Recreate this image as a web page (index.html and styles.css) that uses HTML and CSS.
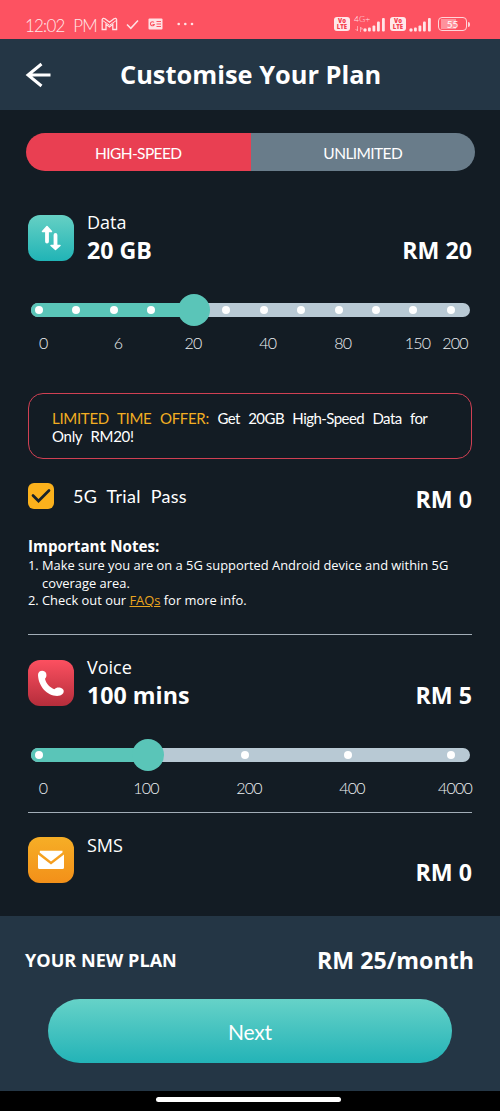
FILE: index.html
```html
<!DOCTYPE html>
<html lang="en">
<head>
<meta charset="utf-8">
<title>Customise Your Plan</title>
<link rel="stylesheet" href="styles.css">
</head>
<body>
<div class="status">
  <span class="clock">12:02 PM</span>
  <svg class="st-left" width="96" height="16" viewBox="0 0 96 16" fill="none" stroke="#ffe1e4">
    <path d="M1.2 13.5V3.6Q2 1.500 4 2.800L8.500 6.300L13 2.800Q15 1.500 15.600 3.600V13.500H11.800V8.300L8.500 10.900L5 8.300V13.500Z" stroke-width="1.300"/>
    <path d="M1.600 4.500L8.500 9.200L15.300 4.500" stroke-width="1"/>
    <path d="M26 8.500L29.800 12.300L37 4.500" stroke-width="1.500"/>
    <rect x="47.500" y="2.500" width="14" height="11" rx="1" fill="#ffe1e4" stroke="none"/>
    <path d="M53 6.500A2 2 0 1 0 53.300 8.500H51.500M55.500 5.500H60M55.500 8H60M55.500 10.500H60" stroke="#fc5462" stroke-width="1.100"/>
    <g fill="#ffe1e4" stroke="none"><circle cx="77.700" cy="8" r="1.300"/><circle cx="84.300" cy="8" r="1.300"/><circle cx="91" cy="8" r="1.300"/></g>
  </svg>
  <div class="st-right">
    <span class="volte"><b>Vo</b><b>LTE</b></span>
    <span class="net"><i>4G+</i><svg width="8" height="6" viewBox="0 0 8 6" stroke="#ffb3ba" fill="none" stroke-width=".8"><path d="M2.500 0V5M.5 3L2.500 5V3M5.500 6V1L7.500 3H5.500"/></svg></span>
    <svg class="bars" width="23" height="15" viewBox="0 0 23 15" fill="#ffe5e8"><circle cx="2" cy="13" r="1.700"/><rect x="5" y="10.500" width="2.800" height="4" rx="1"/><rect x="9.500" y="8.500" width="2.800" height="6" rx="1"/><rect x="14" y="4.500" width="2.800" height="10" rx="1"/><rect x="19" y="1" width="2.800" height="13.500" rx="1"/></svg>
    <span class="volte two"><b>Vo</b><b>LTE</b></span>
    <svg class="bars two" width="23" height="15" viewBox="0 0 23 15" fill="#ffe5e8"><circle cx="2" cy="13" r="1.700"/><rect x="5" y="10.500" width="2.800" height="4" rx="1"/><rect x="9.500" y="8.500" width="2.800" height="6" rx="1"/><rect x="14" y="4.500" width="2.800" height="10" rx="1"/><rect x="19" y="1" width="2.800" height="13.500" rx="1"/></svg>
    <span class="battery">55</span><span class="cap"></span>
  </div>
</div>
<header class="top">
  <svg class="back" width="26" height="26" viewBox="0 0 26 26" fill="none" stroke="#fff" stroke-width="3"><path d="M25.500 13H3M16.500 2L3 13L16.500 24"/></svg>
  <h1>Customise Your Plan</h1>
</header>
<main>
  <div class="tabs"><div class="tab on"><span>HIGH-SPEED</span></div><div class="tab"><span>UNLIMITED</span></div></div>

  <section class="row data">
    <div class="tile teal"><svg width="46" height="46" viewBox="0 0 46 46" fill="none" stroke="#fff" stroke-width="3.800" stroke-linecap="round"><path d="M19 26.500V15M27.500 20V32"/><path d="M14.500 16.500L19 11.500L23.500 16.500ZM23 30.500H32L27.500 34.500Z" fill="#fff" stroke-width="1.500" stroke-linejoin="round"/></svg></div>
    <div class="info"><span class="name">Data</span><strong>20 GB</strong></div>
    <strong class="price">RM 20</strong>
  </section>
  <div class="slider">
    <div class="fill s-data"></div>
    <div class="ticks twelve"><i></i><i></i><i></i><i></i><i></i><i></i><i></i><i></i><i></i><i></i><i></i><i></i></div>
    <div class="knob s-data"></div>
  </div>
  <div class="labels twelve"><span>0</span><span></span><span>6</span><span></span><span>20</span><span></span><span>40</span><span></span><span>80</span><span></span><span>150</span><span>200</span></div>

  <div class="offer"><div><em>LIMITED TIME OFFER:</em> <span class="deal">Get 20GB High-Speed Data for</span></div><div>Only RM20!</div></div>

  <div class="trial">
    <div class="check"><svg width="26" height="26" viewBox="0 0 26 26" fill="none" stroke="#17222b" stroke-width="2.700" stroke-linecap="round"><path d="M5 12.500L10.500 18L21 7.500"/></svg></div>
    <span class="pass">5G Trial Pass</span>
    <strong class="price">RM 0</strong>
  </div>

  <div class="notes">
    <h2>Important Notes:</h2>
    <div class="note"><span>1.</span><p>Make sure you are on a 5G supported Android device and within 5G<br>coverage area.</p></div>
    <div class="note"><span>2.</span><p>Check out our <a>FAQs</a> for more info.</p></div>
  </div>
  <hr>

  <section class="row voice">
    <div class="tile red"><svg width="46" height="46" viewBox="0 0 46 46" fill="#fff"><path d="M10 15C9.800 9.800 17 9.300 18.200 13.500C18.800 16 18.300 17.300 17 18.700C18 23.500 22 27.500 26.300 29.300C28 27.600 30 27.300 32.500 27.800C37.500 29 36.500 35 31 35.800C20 37 10.500 27 10 15Z"/></svg></div>
    <div class="info"><span class="name">Voice</span><strong>100 mins</strong></div>
    <strong class="price">RM 5</strong>
  </section>
  <div class="slider">
    <div class="fill s-voice"></div>
    <div class="ticks five"><i></i><i class="hid"></i><i></i><i></i><i></i></div>
    <div class="knob s-voice"></div>
  </div>
  <div class="labels five"><span>0</span><span>100</span><span>200</span><span>400</span><span>4000</span></div>
  <hr class="second">

  <section class="row sms">
    <div class="tile amber"><svg width="46" height="46" viewBox="0 0 46 46" fill="#fff"><path d="M12 13.800H34.500V15.500L23 24.500L11.700 15.500Z"/><path d="M10 17.500L23 27.500L36 17.500V30.500Q36 32 34.500 32H11.500Q10 32 10 30.500Z"/></svg></div>
    <div class="info"><span class="name">SMS</span></div>
    <strong class="price">RM 0</strong>
  </section>
</main>
<footer>
  <div class="total"><span class="plan">YOUR NEW PLAN</span><span class="sum">RM 25/month</span></div>
  <div class="next"><span>Next</span></div>
</footer>
<div class="nav"><div></div></div>
</body>
</html>
```
FILE: styles.css
```css
* { box-sizing: border-box; margin: 0; padding: 0; }
body { width: 500px; height: 1111px; overflow: hidden; background: #131c24; color: #fff; font-family: "Open Sans", "Noto Sans", sans-serif; white-space: nowrap; }
strong { font-weight: 700; }

.status { height: 39px; background: #fd5261; display: flex; align-items: flex-start; padding-left: 25px; }
.clock { font: 300 17px/20px Lato, sans-serif; color: #ffe8ea; margin-top: 16px; width: 75px; word-spacing: 5px; letter-spacing: -.8px; }
.st-left { margin-top: 16px; margin-left: 1px; }
.st-right { display: flex; margin-left: 137px; margin-top: 17px; }
.volte { width: 16px; height: 14px; border-radius: 3px; background: #ffe8ea; color: #f4404f; display: flex; flex-direction: column; align-items: center; padding-top: 1px; }
.volte b { font: 800 6px/6px "Open Sans", sans-serif; }
.net { width: 16px; margin-left: 4px; margin-top: -2px; display: flex; flex-direction: column; }
.net i { font: normal 300 8.500px/9px Lato, sans-serif; color: #ffdfe2; }
.net svg { margin-left: 1px; margin-top: 2px; }
.bars { margin-left: -7px; }
.volte.two { margin-left: 4px; }
.bars.two { margin-left: 3px; }
.battery { width: 29px; height: 14px; margin-left: 6px; border: 1.500px solid #ffd5d9; border-radius: 4px; background: linear-gradient(90deg, #fe929c 0 15px, transparent 15px) 2px 1px / 24px 10px no-repeat; font: 400 10px/13px Lato, sans-serif; text-align: center; color: #fff; }
.cap { width: 2px; height: 5px; margin: 5px 0 0 1px; border-radius: 0 2px 2px 0; background: #ffd5d9; }

.top { height: 71px; background: #243645; display: flex; align-items: center; padding-left: 25px; }
.top h1 { margin-left: 69px; margin-top: -2px; font-size: 25.400px; line-height: 34px; font-weight: 700; }

main { height: 806px; padding: 23px 25px 0 26px; }
.tabs { height: 38px; border-radius: 19px; overflow: hidden; display: flex; }
.tab { width: 224.500px; background: #697c8a; display: flex; align-items: center; justify-content: center; font: 400 15.500px/20px Lato, sans-serif; letter-spacing: -.6px; }
.tab.on { background: #e93f52; }
.tab span { margin-top: 2px; }

.row { display: flex; height: 46px; margin-left: 2px; margin-right: 3px; }
.data { margin-top: 44px; }
.tile { width: 46px; height: 46px; border-radius: 12px; }
.tile svg { display: block; }
.teal { background: linear-gradient(#66d0c4, #21b4b6); }
.red { background: linear-gradient(#fc5060, #b52d3b); }
.amber { background: linear-gradient(#f6ae26, #f39019); }
.info { margin-left: 13px; display: flex; flex-direction: column; }
.name { font-size: 18px; line-height: 24px; margin-top: -5px; }
.info strong { font-size: 23.200px; line-height: 30px; margin-top: 1px; }
.price { font-size: 23.200px; line-height: 30px; margin: 20px 0 0 auto; }

.slider { position: relative; width: 439px; height: 14px; margin: 42px 0 0 5px; border-radius: 7px; background: #b8c9d4; }
.fill { height: 14px; border-radius: 7px; background: #5ac5b8; }
.fill.s-data { width: 163px; }
.fill.s-voice { width: 117px; }
.ticks { position: absolute; left: 0; top: 3px; display: grid; justify-items: center; }
.ticks.twelve { left: -10.700px; grid-template-columns: repeat(12, 37.450px); }
.ticks.five { left: -43.500px; grid-template-columns: repeat(5, 103px); }
.ticks i { width: 8px; height: 8px; border-radius: 50%; background: #fff; }
.ticks .hid { visibility: hidden; }
.knob { position: absolute; top: -9px; width: 32px; height: 32px; border-radius: 50%; background: #5ac5b8; }
.knob.s-data { left: 147px; }
.knob.s-voice { left: 101px; }
.labels { display: grid; margin-top: 16px; font: 300 16px/20px Lato, sans-serif; color: #eef1f3; }
.labels span { display: flex; justify-content: center; letter-spacing: -.8px; }
.labels.twelve { margin-left: -1.500px; grid-template-columns: repeat(12, 37.450px); }
.labels.five { margin-left: -34.500px; grid-template-columns: repeat(5, 103px); }

.offer { height: 66px; margin: 40px 3px 0 2px; border: 1.500px solid #d04053; border-radius: 15px; padding: 15px 0 0 23px; font: 400 15px/18px Lato, sans-serif; word-spacing: 5px; letter-spacing: -.3px; }
.offer em { font-style: normal; color: #f2ae22; }
.deal { letter-spacing: -.55px; }

.trial { display: flex; height: 30px; margin: 24px 3px 0 2px; }
.check { width: 26px; height: 26px; border-radius: 6px; background: #fbb11c; }
.pass { margin-left: 19px; font: 400 18px/26px Lato, sans-serif; word-spacing: 5px; letter-spacing: .3px; }
.trial .price { margin-top: 1px; }

.notes { margin: 22px 0 0 2px; font-size: 12.900px; line-height: 17.700px; }
.notes h2 { font-size: 15.200px; line-height: 22px; font-weight: 700; }
.note { display: flex; }
.note span { width: 14px; }
.notes a { color: #e9a51f; text-decoration: underline; }
hr { border: 0; height: 1px; background: #a2adb7; margin: 24px 3px 0 2px; }
.voice { margin-top: 25px; }
hr.second { margin-top: 14px; }
.sms { margin-top: 24px; }
.sms .info { padding-top: 1px; }

footer { height: 175px; background: #243645; padding: 26px 26px 0 25px; }
.total { display: flex; justify-content: space-between; align-items: center; height: 36px; font-weight: 700; }
.plan { font-size: 18.100px; }
.sum { font-size: 23.200px; }
.next { height: 64px; margin: 21px 22px 0 23px; border-radius: 32px; background: linear-gradient(#66d2c8, #23b3b7); display: flex; justify-content: center; align-items: center; font: 400 21px/28px Lato, sans-serif; letter-spacing: -.2px; }
.next span { margin-top: 2px; }
.nav { height: 20px; background: #000; display: flex; justify-content: center; padding-top: 6px; }
.nav div { width: 185px; height: 5px; margin-right: 3px; border-radius: 3px; background: #fff; }
```
